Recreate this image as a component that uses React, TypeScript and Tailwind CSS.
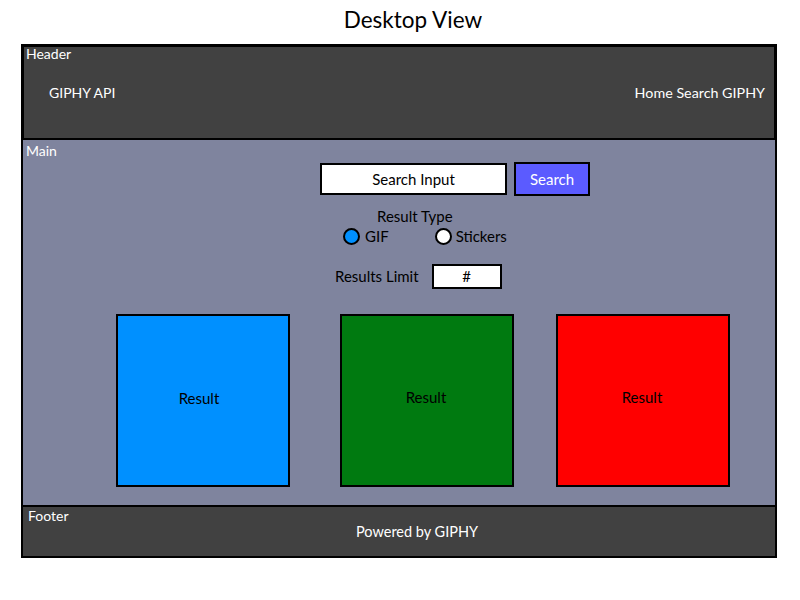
import React from "react";

export default function App() {
  const font = { fontFamily: "Lato, 'Noto Sans', sans-serif" };
  return (
    <div className="w-[800px] h-[600px] bg-white" style={font}>
      <div className="h-[44px] flex items-start justify-center pl-[26px] pt-[6px]">
        <h1 className="text-[22.5px] text-black leading-[28px]">Desktop View</h1>
      </div>
      <div className="ml-[21px] w-[756px] flex flex-col">
        <header className="h-[96px] bg-[#414141] border-[3px] border-b-2 border-black flex flex-col text-white text-[14px]">
          <div className="pl-[2px] leading-[16px] -mt-[1px]">Header</div>
          <div className="flex justify-between items-center pl-[25px] pr-[9px] mt-[23px] leading-[16px]">
            <span>GIPHY API</span>
            <span className="text-[14.3px]">Home Search GIPHY</span>
          </div>
        </header>
        <main className="h-[365px] bg-[#7f849e] border-x-2 border-black flex flex-col text-[15px] text-black">
          <div className="pl-[3px] pt-[3px] leading-[16px] text-white text-[14px]">Main</div>
          <div className="flex items-center gap-[7px] mt-[3px] pl-[297px]">
            <div className="w-[187px] h-[32px] bg-white border-2 border-black flex items-center justify-center">Search Input</div>
            <div className="w-[76px] h-[34px] bg-[#5b5bff] border-2 border-black flex items-center justify-center text-white">Search</div>
          </div>
          <div className="flex flex-col items-start mt-[11px] pl-[320px]">
            <div className="leading-[18px] pl-[34px]">Result Type</div>
            <div className="flex items-center mt-[2px] leading-[18px]">
              <span className="w-[17px] h-[17px] rounded-full bg-[#0090ff] border-2 border-black"></span>
              <span className="ml-[5px]">GIF</span>
              <span className="ml-[46px] w-[17px] h-[17px] rounded-full bg-white border-2 border-black"></span>
              <span className="ml-[4px]">Stickers</span>
            </div>
          </div>
          <div className="flex items-center mt-[19px] pl-[312px]">
            <span>Results Limit</span>
            <div className="ml-[13px] w-[70px] h-[25px] bg-white border-2 border-black flex items-center justify-center">#</div>
          </div>
          <div className="flex mt-[25px] pl-[93px] gap-[50px]">
            <div className="w-[174px] h-[173px] bg-[#0090ff] border-2 border-black flex items-center justify-center pb-[5px] pr-[8px]">Result</div>
            <div className="w-[174px] h-[173px] bg-[#007a10] border-2 border-black flex items-center justify-center pb-[7px] pr-[2px]">Result</div>
            <div className="ml-[-8px] w-[174px] h-[173px] bg-[#ff0000] border-2 border-black flex items-center justify-center pb-[7px] pr-[2px]">Result</div>
          </div>
        </main>
        <footer className="h-[53px] bg-[#414141] border-2 border-black text-white text-[14px] flex flex-col">
          <div className="pl-[5px] leading-[16px] mt-[1px]">Footer</div>
          <div className="mt-[-1px] pl-[333px] text-[14.5px] leading-[18px]">Powered by GIPHY</div>
        </footer>
      </div>
    </div>
  );
}
